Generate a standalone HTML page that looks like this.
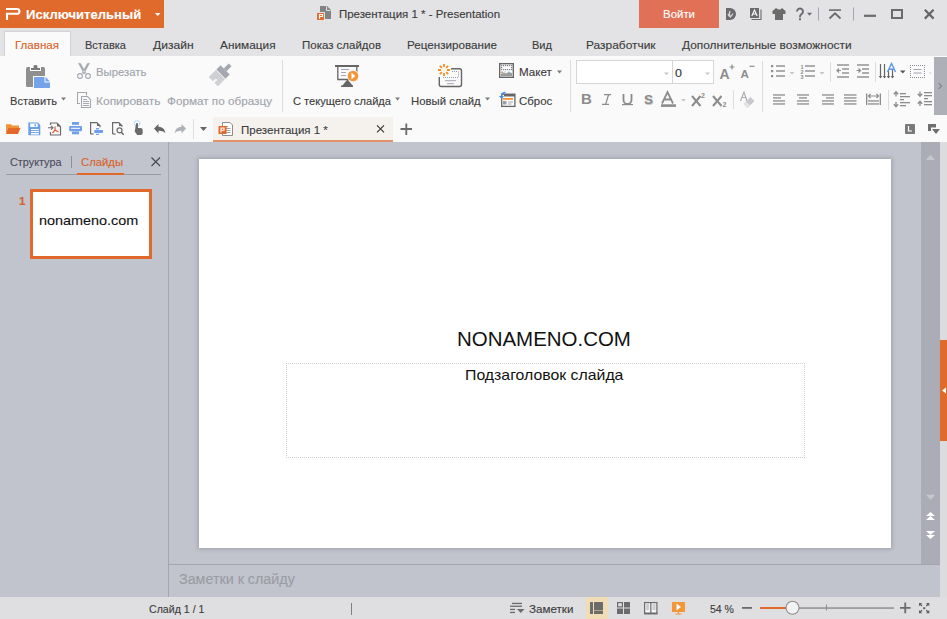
<!DOCTYPE html>
<html><head><meta charset="utf-8">
<style>
*{margin:0;padding:0;box-sizing:border-box}
html,body{width:947px;height:619px;overflow:hidden;background:#e3e3e6;font-family:"Liberation Sans",sans-serif}
.a{position:absolute}
.t{position:absolute;white-space:nowrap;line-height:1;font-size:11px;color:#3c3c3c;transform-origin:0 0;-webkit-text-stroke:0.12px currentColor}
.g{color:#a0a4ac}
svg{position:absolute;overflow:visible}
</style></head><body>
<!-- title bar -->
<div class="a" style="left:0;top:0;width:947px;height:56px;background:#e3e3e6"></div>
<div class="a" style="left:0;top:0;width:164px;height:28px;background:#df6a2c"></div>
<div class="t" style="left: 26px; --b: 19; --w: 114; font-size: 13px; font-weight: bold; color: rgb(255, 255, 255); top: 8px; transform: scaleX(1.0065);">Исключительный</div>
<div class="t" style="left: 339px; --b: 18; --w: 160; color: rgb(58, 58, 58); top: 8.69px; transform: scaleX(1.0423);">Презентация 1 * - Presentation</div>
<div class="a" style="left:639px;top:0;width:80px;height:28px;background:#e07156"></div>
<div class="t" style="left: 663px; --b: 18; --w: 31; color: rgb(255, 255, 255); top: 8.69px; transform: scaleX(1.04);">Войти</div>

<!-- tabs -->
<div class="a" style="left:4px;top:31px;width:67px;height:26px;background:#fafafa;border:1px solid #d2d2d4;border-bottom:none"></div>
<div class="t" style="left: 15px; --b: 49; --w: 43; color: rgb(216, 97, 42); top: 39.69px; transform: scaleX(1.0517);">Главная</div>
<div class="t" style="left: 85px; --b: 49; --w: 40; top: 39.69px; transform: scaleX(1.0025);">Вставка</div>
<div class="t" style="left: 153px; --b: 49; --w: 39.5; top: 39.69px; transform: scaleX(1.0974);">Дизайн</div>
<div class="t" style="left: 220px; --b: 49; --w: 54.5; top: 39.69px; transform: scaleX(1.076);">Анимация</div>
<div class="t" style="left: 302px; --b: 49; --w: 78; top: 39.69px; transform: scaleX(1.0436);">Показ слайдов</div>
<div class="t" style="left: 407px; --b: 49; --w: 89; top: 39.69px; transform: scaleX(1.06);">Рецензирование</div>
<div class="t" style="left: 531.5px; --b: 49; --w: 19; top: 39.69px; transform: scaleX(1.0044);">Вид</div>
<div class="t" style="left: 586px; --b: 49; --w: 68.5; top: 39.69px; transform: scaleX(1.0844);">Разработчик</div>
<div class="t" style="left: 682px; --b: 49; --w: 168.5; top: 39.69px; transform: scaleX(1.0822);">Дополнительные возможности</div>

<!-- ribbon -->
<div class="a" style="left:0;top:56px;width:947px;height:86px;background:#fafafa"></div>
<div class="t" style="left: 10px; --b: 105.4; --w: 46; top: 96.09px; transform: scaleX(1.0077);">Вставить</div>
<div class="t g" style="left: 96px; --b: 76.6; --w: 49.4; top: 67.29px; transform: scaleX(1.0303);">Вырезать</div>
<div class="t g" style="left: 96px; --b: 105.4; --w: 63.4; top: 96.09px; transform: scaleX(1.0885);">Копировать</div>
<div class="t g" style="left: 167px; --b: 105.5; --w: 104; top: 96.19px; transform: scaleX(1.065);">Формат по образцу</div>
<div class="a" style="left:282px;top:60px;width:1px;height:52px;background:#dcdcdc"></div>
<div class="t" style="left: 293px; --b: 105.5; --w: 97; top: 96.19px; transform: scaleX(1.0083);">С текущего слайда</div>
<div class="t" style="left: 411px; --b: 105.3; --w: 68.7; top: 95.99px; transform: scaleX(1.031);">Новый слайд</div>
<div class="t" style="left: 519px; --b: 76.4; --w: 31.8; top: 67.09px; transform: scaleX(1.0547);">Макет</div>
<div class="t" style="left: 519px; --b: 105.4; --w: 32.2; top: 96.09px; transform: scaleX(1.0389);">Сброс</div>
<div class="a" style="left:570px;top:60px;width:1px;height:52px;background:#dcdcdc"></div>
<div class="a" style="left:576px;top:60px;width:138px;height:24px;background:#fff;border:1px solid #d6d6d6"></div>
<div class="a" style="left:672px;top:61px;width:1px;height:22px;background:#d6d6d6"></div>
<div class="t" style="left: 675px; --b: 77; --w: 5.8; font-size: 11px; color: rgb(51, 51, 51); top: 67.69px; transform: scaleX(1.1295);">0</div>
<div class="a" style="left:762px;top:61px;width:1px;height:51px;background:#dcdcdc"></div>
<div class="a" style="left:934px;top:57px;width:13px;height:58px;background:#aeb0b8"></div>

<!-- QAT / doc tabs -->
<div class="a" style="left:213px;top:117px;width:180px;height:25px;background:#f5f2ee"></div>
<div class="a" style="left:213px;top:140px;width:180px;height:2px;background:#e0916a"></div>
<div class="t" style="left: 240.5px; --b: 134.4; --w: 85.8; top: 125.09px; transform: scaleX(1.0466);">Презентация 1 *</div>
<div class="a" style="left:193px;top:119px;width:1px;height:20px;background:#dedede"></div>

<!-- workspace -->
<div class="a" style="left:0;top:142px;width:940px;height:455px;background:#c1c4cd"></div>
<div class="a" style="left:940px;top:142px;width:7px;height:455px;background:#dcdcdf"></div>
<div class="a" style="left:168px;top:142px;width:1px;height:455px;background:#a3a6ae"></div>
<div class="a" style="left:921px;top:142px;width:19px;height:422px;background:#abacb6"></div>
<div class="a" style="left:169px;top:564px;width:771px;height:1px;background:#a3a6ae"></div>
<div class="a" style="left:940px;top:340px;width:7px;height:101px;background:#df6a2c"></div>

<!-- left panel -->
<div class="t" style="left: 10px; --b: 166; --w: 50.5; color: rgb(74, 76, 92); top: 156.69px; transform: scaleX(0.9864);">Структура</div>
<div class="a" style="left:71px;top:156px;width:1px;height:12px;background:#8e9098"></div>
<div class="t" style="left: 81px; --b: 166; --w: 41; color: rgb(217, 98, 43); top: 156.69px; transform: scaleX(1.0259);">Слайды</div>
<div class="a" style="left:6px;top:174px;width:155px;height:1px;background:#9a9ca4"></div>
<div class="a" style="left:77px;top:173px;width:47px;height:2px;background:#df6a2c"></div>
<div class="a" style="left:30px;top:189px;width:122px;height:70px;background:#fff;border:3px solid #df6a2c"></div>
<div class="t" style="left: 19px; --b: 205.6; --w: 5.4; font-size: 11px; font-weight: bold; color: rgb(217, 98, 43); top: 196.29px; transform: scaleX(1.0516);">1</div>
<div class="t" style="left: 39px; --b: 225.9; --w: 98; font-size: 13.5px; color: rgb(17, 17, 17); top: 214.47px; transform: scaleX(1.067);">nonameno.com</div>

<!-- slide -->
<div class="a" style="left:199px;top:159px;width:692px;height:389px;background:#fff;box-shadow:0 0 4px 1px rgba(90,92,104,0.35)"></div>
<div class="t" style="left: 456.8px; --b: 346; --w: 172; font-size: 20.5px; color: rgb(17, 17, 17); -webkit-text-stroke: 0px; top: 328.65px; transform: scaleX(0.9977);">NONAMENO.COM</div>
<div class="a" style="left:286px;top:363px;width:519px;height:95px;border:1px dotted #cfcfcf"></div>
<div class="t" style="left: 464.7px; --b: 380; --w: 157; font-size: 15px; color: rgb(17, 17, 17); -webkit-text-stroke: 0px; top: 367.3px; transform: scaleX(1.0553);">Подзаголовок слайда</div>

<!-- notes -->
<div class="t" style="left: 179px; --b: 584; --w: 114.5; font-size: 14px; color: rgb(154, 156, 165); top: 572.15px; transform: scaleX(1.021);">Заметки к слайду</div>

<!-- status bar -->
<div class="a" style="left:0;top:597px;width:947px;height:22px;background:#dfdfe2"></div>
<div class="t" style="left: 149px; --b: 613.3; --w: 54.5; top: 603.99px; transform: scaleX(0.9642);">Слайд 1 / 1</div>
<div class="a" style="left:351px;top:603px;width:1px;height:12px;background:#808080"></div>
<div class="t" style="left: 529px; --b: 613; --w: 43.4; top: 603.69px; transform: scaleX(1.0563);">Заметки</div>
<div class="a" style="left:586px;top:597px;width:22px;height:22px;background:#f1ddb5"></div>
<div class="t" style="left: 709.5px; --b: 613; --w: 23; top: 603.69px; transform: scaleX(0.9548);">54 %</div>

<svg class="a" style="left:0;top:0" width="947" height="619" viewBox="0 0 947 619">
<!-- ===== title bar ===== -->
<path d="M6,9 H17 A2.4,2.4 0 0 1 17,13.8 H7 V20" fill="none" stroke="#fff" stroke-width="2.1"></path>
<path d="M155,13 h5.5 l-2.75,3z" fill="#fff"></path>
<!-- title doc icon -->
<path d="M320,6 h7 l4,4 v9 h-11z" fill="#838383"></path>
<path d="M326.5,6.5 v4 h4" fill="none" stroke="#e3e3e6" stroke-width="1"></path>
<rect x="316.5" y="12.5" width="8" height="8" fill="#df6a2c" stroke="#e3e3e6" stroke-width="1"></rect>
<path d="M319.5,19 v-4.5 h3 v2 h-3" fill="none" stroke="#fff" stroke-width="1.2"></path>
<!-- right icons -->
<path d="M726,8 h4 a6,6 0 0 1 0,12 h-4z" fill="#6b6b6b"></path>
<path d="M730,11 q-1.5,3 0.5,6 q1.5,-2 2.5,-3.5 M730.5,17 q-2,-1 -2.5,-3" fill="none" stroke="#d8d8dc" stroke-width="1.2"></path>
<path d="M751.5,19.5 h9.5 v-10" fill="none" stroke="#6b6b6b" stroke-width="1.1"></path>
<rect x="750" y="8" width="9" height="10" fill="#6b6b6b"></rect>
<path d="M751.8,16 l2.7,-6 l2.7,6 M752.8,14 h3.4" fill="none" stroke="#fff" stroke-width="1.1"></path>
<path d="M776,8 l-3.5,3 v3 h2.5 v6 h8 v-6 h2.5 v-3 l-3.5,-3 q-2,3 -6,0z" fill="#6b6b6b"></path>
<path d="M797,11.5 a3,3 0 1 1 4.5,2.6 q-1.5,0.9 -1.5,2.4 v0.8" fill="none" stroke="#6b6b6b" stroke-width="1.9"></path><rect x="799" y="18.2" width="2" height="2" fill="#6b6b6b"></rect>
<path d="M807,12.8 h5 l-2.5,3z" fill="#6b6b6b"></path>
<rect x="818" y="7.5" width="1" height="13" fill="#a3a6b4"></rect>
<rect x="829" y="9.3" width="12" height="1.6" fill="#6b6b6b"></rect>
<path d="M829.5,18.5 L835,13.3 L840.5,18.5" fill="none" stroke="#6b6b6b" stroke-width="1.8"></path>
<rect x="853" y="7.5" width="1" height="13" fill="#a3a6b4"></rect>
<rect x="864" y="14.7" width="12" height="2.2" fill="#6b6b6b"></rect>
<rect x="892" y="10" width="10" height="8" fill="none" stroke="#6b6b6b" stroke-width="2"></rect>
<path d="M924.8,9.8 l8.8,8.8 M933.6,9.8 l-8.8,8.8" fill="none" stroke="#666" stroke-width="2.2"></path>
<!-- ===== ribbon ===== -->
<!-- paste -->
<rect x="26" y="67" width="19" height="20" rx="1.5" fill="#8f8f8f"></rect>
<rect x="30" y="67" width="11" height="4" fill="#fafafa"></rect>
<rect x="31" y="68" width="9" height="2" fill="#7a7a7a"></rect>
<rect x="33.5" y="65" width="4" height="3.5" rx="1.5" fill="#7a7a7a"></rect>
<path d="M33,76 h12 l6,6 v7 h-18z" fill="#fafafa"></path>
<path d="M34,77 h10.5 v5.5 h5.5 v5.5 h-16z" fill="#74a3e9"></path>
<path d="M45.5,77 l4.5,4.5 h-4.5z" fill="#74a3e9"></path>
<path d="M61,97.5 h5 l-2.5,3z" fill="#7a7a7a"></path>
<!-- scissors -->
<path d="M78.5,63.2 L80.5,63.5 L85.8,72.8 L84.2,73.8z M89.5,63.2 L87.5,63.5 L82.2,72.8 L83.8,73.8z" fill="#a4a7b0" stroke="#a4a7b0" stroke-width="0.6"></path>
<circle cx="80" cy="76" r="2.4" fill="none" stroke="#a4a7b0" stroke-width="1.1"></circle>
<circle cx="88" cy="76" r="2.4" fill="none" stroke="#a4a7b0" stroke-width="1.1"></circle>
<!-- copy -->
<path d="M80,103.5 h-2.5 v-11 h9 v3" fill="none" stroke="#a4a7b0" stroke-width="1.1"></path>
<path d="M81.5,96.5 h6 l3,3 v8 h-9z" fill="#fafafa" stroke="#a4a7b0" stroke-width="1.1"></path>
<path d="M83,99.5 h4 M83,101.5 h6 M83,103.5 h6 M83,105.5 h6" stroke="#a4a7b0" stroke-width="1"></path>
<!-- format painter -->
<g transform="translate(219.5,75.5) rotate(45)">
<rect x="-2" y="-15" width="4" height="7" fill="#a5a7b0"></rect>
<rect x="-6.5" y="-8" width="13" height="6" fill="#a5a7b0"></rect>
<path d="M-6.5,-1.3 h13 v10 h-5 v-4 h-2 v4 h-6z" fill="#cfd0d3"></path>
</g>
<!-- presenter -->
<rect x="335" y="65" width="24" height="2" fill="#666"></rect>
<path d="M337.8,67 v12.5 h19 v-12.5" fill="none" stroke="#666" stroke-width="1.3"></path>
<path d="M341,69.5 h8 M341,72.5 h5 M341,75.5 h5" stroke="#a3a5b3" stroke-width="1"></path>
<circle cx="353" cy="76" r="6" fill="#fafafa"></circle>
<circle cx="353" cy="76" r="5.3" fill="#f29638"></circle>
<path d="M351.5,72.7 l4,3.3 l-4,3.3z" fill="#fff"></path>
<path d="M347,80 l-5,6 h11 l-5,-6z" fill="#666"></path>
<rect x="341" y="85.5" width="12" height="1.5" fill="#666"></rect>
<path d="M395,97.5 h5 l-2.5,3z" fill="#7a7a7a"></path>
<!-- new slide -->
<path d="M451,68.8 h8.5 a2,2 0 0 1 2,2 v13.7 a2,2 0 0 1 -2,2 h-18.2 a2,2 0 0 1 -2,-2 v-7.5" fill="none" stroke="#666" stroke-width="1.4"></path>
<path d="M443,77.5 h16 M458.5,71.5 v6 M452,71.5 h6" stroke="#9a9ca8" stroke-width="1" stroke-dasharray="1,1"></path>
<path d="M445,80.7 h11 M447,83.7 h7" stroke="#a3a5b3" stroke-width="1"></path>
<g stroke="#f0902c" stroke-width="1.8">
<path d="M444,64 v3 M444,73 v3 M438,70 h3 M447,70 h3 M439.8,65.8 l2.1,2.1 M446.1,72.1 l2.1,2.1 M439.8,74.2 l2.1,-2.1 M446.1,67.9 l2.1,-2.1"></path>
</g>
<circle cx="444" cy="70" r="1.8" fill="#fff6c8"></circle>
<path d="M485,97.5 h5 l-2.5,3z" fill="#7a7a7a"></path>
<!-- layout -->
<rect x="499.7" y="63.7" width="13.6" height="13.6" fill="#fff" stroke="#666" stroke-width="1.4"></rect>
<g fill="#7c7e88"><rect x="501" y="65" width="1.2" height="1.2"></rect><rect x="503" y="65" width="1.2" height="1.2"></rect><rect x="505" y="65" width="1.2" height="1.2"></rect><rect x="507" y="65" width="1.2" height="1.2"></rect><rect x="509" y="65" width="1.2" height="1.2"></rect><rect x="511" y="65" width="1.2" height="1.2"></rect><rect x="501" y="69" width="1.2" height="1.2"></rect><rect x="503" y="69" width="1.2" height="1.2"></rect><rect x="505" y="69" width="1.2" height="1.2"></rect><rect x="507" y="69" width="1.2" height="1.2"></rect><rect x="509" y="69" width="1.2" height="1.2"></rect><rect x="511" y="69" width="1.2" height="1.2"></rect><rect x="501" y="67" width="1.2" height="1.2"></rect><rect x="511" y="67" width="1.2" height="1.2"></rect></g>
<path d="M501,76.3 v-2.3 l2.5,-1.5 l2.5,1 l2.5,-1.8 l3.5,1.3 v3.3z" fill="#9c9c9c"></path>
<rect x="501" y="71.5" width="2" height="1.5" fill="#f09a50"></rect><path d="M504,72 h2 M508,72 h2" stroke="#9ad0f0" stroke-width="1"></path>
<path d="M557,70.5 h5 l-2.5,3z" fill="#7a7a7a"></path>
<!-- reset -->
<rect x="501.7" y="94.2" width="13.2" height="12.2" fill="#fff" stroke="#666" stroke-width="1.3"></rect>
<rect x="504" y="94" width="11" height="2.5" fill="#666"></rect>
<rect x="503" y="98" width="10" height="1.8" fill="#f29638"></rect>
<rect x="503" y="101" width="3.5" height="3.5" fill="#9a9ca8"></rect>
<path d="M508,102 h5 M508,104 h3.5" stroke="#a3a5b3" stroke-width="1"></path>
<path d="M505.5,92.5 q-4,0 -4,4" fill="none" stroke="#4a8be8" stroke-width="1.6"></path>
<path d="M499,96 h5 l-2.5,3z" fill="#4a8be8"></path>
<!-- ===== font group ===== -->
<path d="M664,72.5 h5 l-2.5,2.5z M705,72.5 h5 l-2.5,2.5z" fill="#c4c6cc"></path>
<text x="719.5" y="78.7" font-family="Liberation Sans" font-weight="bold" font-size="14" fill="#8c8c8c">A</text>
<path d="M729.5,67 h5 M732,64.5 v5" stroke="#8c8c8c" stroke-width="1.2"></path>
<text x="740.5" y="78" font-family="Liberation Sans" font-weight="bold" font-size="11.5" fill="#8c8c8c">A</text>
<path d="M749.5,66.3 h5" stroke="#8c8c8c" stroke-width="1.2"></path>
<text x="581" y="104.2" font-family="Liberation Sans" font-weight="bold" font-size="15" fill="#8c8c8c">B</text>
<path d="M604,94.6 h7.2 M602,104.4 h7 M608.6,94.6 l-3,9.8" fill="none" stroke="#8c8c8c" stroke-width="1.3"></path>
<path d="M623.5,94 v6 a3.5,3.5 0 0 0 8,0 v-6" fill="none" stroke="#8c8c8c" stroke-width="1.8"></path>
<rect x="622" y="104" width="11" height="1.2" fill="#8c8c8c"></rect>
<text x="644.5" y="104.5" font-family="Liberation Sans" font-weight="bold" font-size="13.5" fill="#c8c8c8">S</text>
<text x="644" y="104" font-family="Liberation Sans" font-weight="bold" font-size="13.5" fill="#8c8c8c">S</text>
<path d="M662,103.5 l5.5,-11.5 l5.5,11.5 M664.5,99.5 h6" fill="none" stroke="#8c8c8c" stroke-width="1.8"></path>
<rect x="661" y="104.3" width="15" height="2.6" fill="#8c8c8c"></rect>
<path d="M681,99 h5 l-2.5,2.5z" fill="#c4c6cc"></path>
<path d="M692,96 l8.5,10 M700.5,96 l-8.5,10" stroke="#8c8c8c" stroke-width="2"></path>
<text x="701" y="97.5" font-family="Liberation Sans" font-size="7" font-weight="bold" fill="#8c8c8c">2</text>
<path d="M713,96 l8.5,10 M721.5,96 l-8.5,10" stroke="#8c8c8c" stroke-width="2"></path>
<text x="722.5" y="106.5" font-family="Liberation Sans" font-size="7" font-weight="bold" fill="#8c8c8c">2</text>
<rect x="733" y="90" width="1" height="19" fill="#dcdcdc"></rect>
<path d="M740.5,101 l3.5,-9 l3,9 M742,97.5 h4" fill="none" stroke="#a8aab2" stroke-width="1.1"></path>
<g transform="translate(749,102.5) rotate(-45)"><rect x="-5" y="-2.8" width="10" height="5.6" rx="1" fill="#c8c9ce"></rect><rect x="-5" y="-2.8" width="3.5" height="5.6" fill="#e4e4e6"></rect></g>
<!-- ===== paragraph group ===== -->
<g fill="#8c8c8c">
<rect x="771" y="65" width="2.2" height="2.2"></rect><rect x="771" y="70" width="2.2" height="2.2"></rect><rect x="771" y="75" width="2.2" height="2.2"></rect>
<rect x="776" y="65.3" width="9" height="1.4"></rect><rect x="776" y="70.3" width="9" height="1.4"></rect><rect x="776" y="75.3" width="9" height="1.4"></rect>
<rect x="805" y="65.3" width="10" height="1.4"></rect><rect x="805" y="70.3" width="10" height="1.4"></rect><rect x="805" y="75.3" width="10" height="1.4"></rect>
</g>
<text x="800.5" y="68.5" font-family="Liberation Sans" font-size="5.5" font-weight="bold" fill="#8c8c8c">1</text>
<text x="800.5" y="73.5" font-family="Liberation Sans" font-size="5.5" font-weight="bold" fill="#8c8c8c">2</text>
<text x="800.5" y="78.5" font-family="Liberation Sans" font-size="5.5" font-weight="bold" fill="#8c8c8c">3</text>
<path d="M789.5,72 h5 l-2.5,2.5z M819.5,72 h5 l-2.5,2.5z" fill="#c4c6cc"></path>
<rect x="830" y="62" width="1" height="20" fill="#dcdcdc"></rect>
<g fill="#8c8c8c">
<rect x="837" y="64.3" width="12" height="1.4"></rect><rect x="842" y="68.3" width="7" height="1.4"></rect><rect x="842" y="72.3" width="7" height="1.4"></rect><rect x="837" y="76.3" width="12" height="1.4"></rect>
<rect x="857" y="64.3" width="12" height="1.4"></rect><rect x="862" y="68.3" width="7" height="1.4"></rect><rect x="862" y="72.3" width="7" height="1.4"></rect><rect x="857" y="76.3" width="12" height="1.4"></rect>
</g>
<path d="M841,70.5 h-4 M839,68.5 l-2,2 l2,2" fill="none" stroke="#8c8c8c" stroke-width="1.2"></path>
<path d="M856.5,70.5 h4 M858.5,68.5 l2,2 l-2,2" fill="none" stroke="#8c8c8c" stroke-width="1.2"></path>
<rect x="875" y="62" width="1" height="20" fill="#dcdcdc"></rect>
<path d="M880.5,64 v14 M884.5,64 v14 M888.5,70 v8 M892.5,70 v8" stroke="#666" stroke-width="1.2"></path>
<path d="M878.8,76 l1.7,2.5 l1.7,-2.5z M882.8,76 l1.7,2.5 l1.7,-2.5z M886.8,76 l1.7,2.5 l1.7,-2.5z M890.8,76 l1.7,2.5 l1.7,-2.5z" fill="#666"></path>
<path d="M887.5,72 l4,-8.5 l4,8.5 M888.8,69.3 h5.4" fill="none" stroke="#5a9ae8" stroke-width="1.4"></path>
<path d="M900,70.5 h5.5 l-2.75,3z" fill="#555"></path>
<g fill="#8a8c98"><path d="M910,65h1v1h-1zM912,65h1v1h-1zM914,65h1v1h-1zM916,65h1v1h-1zM918,65h1v1h-1zM920,65h1v1h-1zM922,65h1v1h-1zM924,65h1v1h-1zM910,77h1v1h-1zM912,77h1v1h-1zM914,77h1v1h-1zM916,77h1v1h-1zM918,77h1v1h-1zM920,77h1v1h-1zM922,77h1v1h-1zM924,77h1v1h-1zM910,67h1v1h-1zM910,69h1v1h-1zM910,71h1v1h-1zM910,73h1v1h-1zM910,75h1v1h-1zM924,67h1v1h-1zM924,69h1v1h-1zM924,71h1v1h-1zM924,73h1v1h-1zM924,75h1v1h-1z"></path></g>
<path d="M913.5,69.5 h8 M913.5,73 h8" stroke="#a3a5b3" stroke-width="1"></path>
<path d="M929,72.5 h2.5 l-1.25,1.5z" fill="#c4c6cc"></path>
<path d="M938.5,83 l3,3 l-3,3" fill="none" stroke="#6a6c74" stroke-width="1"></path>
<!-- align row -->
<g fill="#8c8c8c">
<rect x="773" y="94.3" width="12" height="1.3"></rect><rect x="773" y="97.3" width="8" height="1.3"></rect><rect x="773" y="100.3" width="12" height="1.3"></rect><rect x="773" y="103.3" width="12" height="1.3"></rect>
<rect x="797" y="94.3" width="12" height="1.3"></rect><rect x="799" y="97.3" width="8" height="1.3"></rect><rect x="797" y="100.3" width="12" height="1.3"></rect><rect x="797" y="103.3" width="12" height="1.3"></rect>
<rect x="822" y="94.3" width="12" height="1.3"></rect><rect x="826" y="97.3" width="8" height="1.3"></rect><rect x="822" y="100.3" width="12" height="1.3"></rect><rect x="822" y="103.3" width="12" height="1.3"></rect>
<rect x="844" y="94.3" width="12.5" height="1.3"></rect><rect x="844" y="97.3" width="12.5" height="1.3"></rect><rect x="844" y="100.3" width="12.5" height="1.3"></rect><rect x="844" y="103.3" width="12.5" height="1.3"></rect>
<rect x="866" y="93.5" width="1.3" height="11.5"></rect><rect x="879.7" y="93.5" width="1.3" height="11.5"></rect>
<rect x="868" y="100.3" width="11" height="1.3"></rect><rect x="868" y="103.3" width="11" height="1.3"></rect>
</g>
<path d="M868.5,96 h10 M870.5,94 l-2,2 l2,2 M876.5,94 l2,2 l-2,2" fill="none" stroke="#8c8c8c" stroke-width="1.2"></path>
<rect x="888" y="90" width="1" height="20" fill="#dcdcdc"></rect>
<g fill="#8c8c8c">
<rect x="900" y="93" width="6" height="1.3"></rect><rect x="900" y="96" width="10" height="1.3"></rect><rect x="900" y="99" width="4" height="1.3"></rect><rect x="900" y="102" width="10" height="1.3"></rect><rect x="900" y="105" width="6" height="1.3"></rect>
<rect x="924" y="92" width="8" height="1.3"></rect><rect x="924" y="95" width="8" height="1.3"></rect><rect x="924" y="98" width="4" height="1.3"></rect><rect x="924" y="101" width="8" height="1.3"></rect><rect x="924" y="104" width="8" height="1.3"></rect>
</g>
<path d="M896,92 v4.5 M893.8,94.3 l2.2,-2.5 l2.2,2.5 M896,102 v4.5 M893.8,104.2 l2.2,2.5 l2.2,-2.5" fill="none" stroke="#8c8c8c" stroke-width="1.3"></path>
<path d="M920,91.5 v4.5 M917.8,93.7 l2.2,2.5 l2.2,-2.5 M920,101.5 v4.5 M917.8,103.7 l2.2,-2.5 l2.2,2.5" fill="none" stroke="#8c8c8c" stroke-width="1.3"></path>
<!-- ===== QAT ===== -->
<path d="M6,124.2 h5 l1.2,1.3 h6.8 v2.5 h-11 l-2,6 z" fill="#f0943c"></path>
<path d="M8,128 h12.5 l-2.5,6 h-12z" fill="#e2692a"></path>
<path d="M28.3,122.5 h9.5 l2.5,2.5 v9.5 a0.8,0.8 0 0 1 -0.8,0.8 h-10.4 a0.8,0.8 0 0 1 -0.8,-0.8z" fill="#6a9ee8"></path>
<rect x="30.2" y="123.5" width="7.5" height="3.5" fill="#fff"></rect>
<rect x="34.5" y="124.3" width="1.5" height="2" fill="#6a9ee8"></rect>
<rect x="31" y="129" width="7.8" height="5.5" fill="#fff"></rect>
<path d="M31,130.5 h7.8 M31,132.5 h7.8" stroke="#6a9ee8" stroke-width="0.9"></path>
<path d="M50.5,125 v-2 h6.5 l3.5,3.5 v8.5 h-10 v-3" fill="none" stroke="#6b6b6b" stroke-width="1.2"></path>
<path d="M57,123 v3.5 h3.5z" fill="#6b6b6b"></path>
<path d="M48,127.7 h4.5 M51,125.8 l2,1.9 l-2,1.9" fill="none" stroke="#6b6b6b" stroke-width="1.1"></path>
<path d="M55,126.5 v3.5 l-2.5,3 M55,130 l3.5,2" fill="none" stroke="#e05a3a" stroke-width="1.2"></path>
<rect x="72" y="122" width="7" height="2.8" fill="#6f9fe8"></rect>
<rect x="69.2" y="126" width="12.8" height="5.2" rx="1.2" fill="#6f9fe8"></rect>
<rect x="71" y="127.8" width="9" height="1" fill="#fff"></rect>
<rect x="72" y="131.5" width="7" height="2.8" fill="#6f9fe8"></rect>
<path d="M90.6,134 v-11.4 h6.2 l3.2,3.2 v1.5" fill="none" stroke="#6b6b6b" stroke-width="1.2"></path>
<path d="M97,122.5 v3.5 h3.5z" fill="#6b6b6b"></path>
<path d="M90.6,134 h3" stroke="#6b6b6b" stroke-width="1.2"></path>
<rect x="96" y="128" width="3" height="1.5" fill="#6f9fe8"></rect>
<rect x="94.2" y="130" width="8.8" height="3" rx="0.8" fill="#6f9fe8"></rect>
<rect x="96" y="133.8" width="3" height="1.2" fill="#6f9fe8"></rect>
<path d="M112.6,134 v-11.4 h6.2 l3.2,3.2 v1" fill="none" stroke="#6b6b6b" stroke-width="1.2"></path>
<path d="M119,122.5 v3.5 h3.5z" fill="#6b6b6b"></path>
<path d="M112.6,134 h3" stroke="#6b6b6b" stroke-width="1.2"></path>
<circle cx="119.5" cy="130.3" r="2.5" fill="none" stroke="#6b6b6b" stroke-width="1.2"></circle>
<path d="M121.3,132.2 l2.4,2.5" stroke="#6b6b6b" stroke-width="1.6"></path>
<circle cx="137" cy="123.5" r="2.8" fill="none" stroke="#62b4f0" stroke-width="0.9" stroke-dasharray="1,0.8"></circle>
<path d="M136,124 a1,1 0 0 1 2,0 v4 h2.5 a2.2,2.2 0 0 1 2.2,2.2 v2.8 a2,2 0 0 1 -2,2 h-3.5 l-2.5,-3.5z" fill="#6b6b6b"></path>
<path d="M154,128.5 l4.5,-4.5 v2.7 q6,0 7,6.5 q-2,-3 -7,-2.5 v2.8z" fill="#666"></path>
<path d="M186,128.5 l-4.5,-4.5 v2.7 q-6,0 -7,6.5 q2,-3 7,-2.5 v2.8z" fill="#aeb0b8"></path>
<path d="M200,127 h7 l-3.5,4z" fill="#666"></path>
<!-- doc tab -->
<path d="M222.5,122.5 h7.5 l2.5,2.5 v10.5 h-10z" fill="#fff" stroke="#8c8c8c" stroke-width="1"></path>
<path d="M225,128.5 h5.5 M225,130.5 h5.5 M225,132.5 h5.5 M225,126.5 h3" stroke="#9a9a9a" stroke-width="0.9"></path>
<rect x="218.5" y="126" width="8" height="8" rx="0.5" fill="#e2692a"></rect>
<path d="M221,132.5 v-4.5 h3 v2.2 h-3" fill="none" stroke="#fff" stroke-width="1.1"></path>
<path d="M377,125.3 l7,7 M384,125.3 l-7,7" stroke="#333" stroke-width="1.1"></path>
<path d="M400.5,129 h11.5 M406.3,123.5 v11.5" stroke="#6b6b6b" stroke-width="1.8"></path>
<rect x="905" y="124" width="10" height="10" rx="0.8" fill="#7a7a7a"></rect>
<path d="M908.5,126 v5 h3.5" fill="none" stroke="#fff" stroke-width="1.2"></path>
<rect x="928" y="124" width="8" height="7" fill="#6e6e6e"></rect>
<rect x="931" y="127.5" width="5" height="3.5" fill="#fafafa"></rect>
<path d="M932,129 h8 l-4,5z" fill="#6e6e6e"></path>
<!-- left panel close -->
<path d="M151.5,157.5 l8.5,8.5 M160,157.5 l-8.5,8.5" stroke="#45464e" stroke-width="1.1"></path>
<!-- scrollbar arrows -->
<path d="M926,160 l4.5,-5.3 l4.5,5.3z" fill="#c6c8d0"></path>
<path d="M926,494.7 h9 l-4.5,5.3z" fill="#c6c8d0"></path>
<path d="M926,516 l4.5,-4 l4.5,4z M926,520 l4.5,-4 l4.5,4z" fill="#fff"></path>
<path d="M926,531 h9 l-4.5,4z M926,535 h9 l-4.5,4z" fill="#fff"></path>
<path d="M946,387.5 v6 l-4,-3z" fill="#fff"></path>
<!-- ===== status bar ===== -->
<g fill="#6b6b6b">
<rect x="512" y="602.8" width="10" height="1.3"></rect><rect x="510" y="605.6" width="12" height="1.3"></rect><rect x="510" y="608.8" width="5" height="1.3"></rect><rect x="510" y="611.8" width="5" height="1.3"></rect>
<path d="M517,609 h7.5 l-3.75,4z"></path>
<rect x="590" y="602" width="3" height="12" rx="0.5"></rect><rect x="594" y="602" width="9" height="8" rx="0.5"></rect><rect x="594" y="610.5" width="9" height="3.5" rx="0.5"></rect>
<rect x="617" y="602" width="6" height="5.5"></rect><rect x="624" y="602" width="6" height="5.5"></rect><rect x="617" y="608.5" width="6" height="5.5"></rect><rect x="624" y="608.5" width="6" height="5.5"></rect>
</g>
<rect x="618.2" y="603.2" width="3.6" height="3.1" fill="#dfdfe2"></rect>
<rect x="644.6" y="602.6" width="12.3" height="11" fill="#f4f4f4" stroke="#6b6b6b" stroke-width="1.2"></rect>
<rect x="650.2" y="602.6" width="1.2" height="11" fill="#6b6b6b"></rect>
<rect x="644" y="612.5" width="13.5" height="1.8" fill="#6b6b6b"></rect>
<path d="M646,605 h3 M646,607 h3 M646,609 h3 M652.5,605 h3 M652.5,607 h3 M652.5,609 h3" stroke="#9a9ca8" stroke-width="0.9"></path>
<rect x="672" y="602" width="13" height="10" fill="#f29638"></rect>
<path d="M676.5,603.5 l4.5,3.5 l-4.5,3.5z" fill="#fff"></path>
<path d="M678.5,612 v2 M675.5,614 h6" stroke="#f29638" stroke-width="1.2"></path>
<rect x="742" y="607" width="10" height="1.8" fill="#6b6b6b"></rect>
<rect x="760" y="607" width="29" height="2" fill="#e2692a"></rect>
<rect x="790" y="607.3" width="104" height="1.5" fill="#8e8e8e"></rect>
<rect x="826" y="604.5" width="1" height="6" fill="#8e8e8e"></rect>
<circle cx="792.5" cy="607.8" r="6.5" fill="#f2f2f2" stroke="#8e8e8e" stroke-width="1.1"></circle>
<path d="M900,607.9 h10.5 M905.25,602.5 v10.7" stroke="#6b6b6b" stroke-width="1.8"></path>
<g fill="#5e5e5e">
<path d="M919,603 h3.2 l-3.2,3.2z M929.3,603 v3.2 l-3.2,-3.2z M919,613.3 v-3.2 l3.2,3.2z M929.3,613.3 h-3.2 l3.2,-3.2z"></path>
<path d="M920,604 l2,2 M928.3,604 l-2,2 M920,612.3 l2,-2 M928.3,612.3 l-2,-2" stroke="#5e5e5e" stroke-width="1.3"></path>
<rect x="923.2" y="607.2" width="2" height="2"></rect>
</g>
</svg>

</body></html>
